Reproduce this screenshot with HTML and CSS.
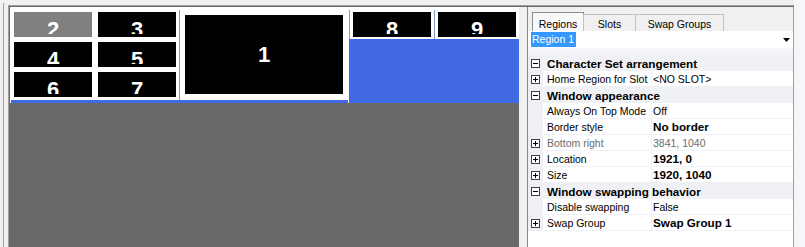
FILE: index.html
```
<!DOCTYPE html>
<html>
<head>
<meta charset="utf-8">
<title>Regions</title>
<link rel="stylesheet" href="styles.css">
</head>
<body>
<div class="edge"><div class="edge-line"></div></div>
<div class="split">
  <div class="split-in">
    <div class="canvas">
      <div class="monrow">
        <div class="mon1">
          <div class="mon1-body">
            <div class="tiles">
              <div class="tile sel"><div class="clip">2</div></div>
              <div class="tile"><div class="clip">3</div></div>
              <div class="tile"><div class="clip">4</div></div>
              <div class="tile"><div class="clip">5</div></div>
              <div class="tile"><div class="clip">6</div></div>
              <div class="tile"><div class="clip">7</div></div>
            </div>
            <div class="vsep vsep-long"></div>
            <div class="bigtile">1</div>
          </div>
          <div class="mon1-bar"></div>
        </div>
        <div class="mon2">
          <div class="mon2-top">
            <div class="vsep"></div>
            <div class="tile"><div class="clip">8</div></div>
            <div class="vsep mid"></div>
            <div class="tile"><div class="clip">9</div></div>
          </div>
          <div class="mon2-fill"></div>
        </div>
      </div>
    </div>
    <div class="gap"></div>
    <div class="props">
      <div class="tabs">
        <div class="tab active t-regions">Regions</div>
        <div class="tab t-slots">Slots</div>
        <div class="tab t-swap">Swap Groups</div>
      </div>
      <div class="page">
        <div class="combo">
          <span class="combo-sel">Region 1</span>
          <svg class="combo-arrow" width="7" height="4" viewBox="0 0 7 4"><path d="M0 0h7L3.5 4z" fill="#000"/></svg>
        </div>
        <div class="spacer"></div>
        <div class="grid">
          <div class="row cat">
            <span class="gut"><svg width="9" height="9" viewBox="0 0 9 9"><rect x="0.5" y="0.5" width="8" height="8" fill="#fff" stroke="#404040"/><path d="M2 4.5h5" stroke="#000"/></svg></span>
            <span class="name">Character Set arrangement</span>
          </div>
          <div class="row">
            <span class="gut"><svg width="9" height="9" viewBox="0 0 9 9"><rect x="0.5" y="0.5" width="8" height="8" fill="#fff" stroke="#404040"/><path d="M2 4.5h5M4.5 2v5" stroke="#000"/></svg></span>
            <span class="lbl">Home Region for Slot</span>
            <span class="val">&lt;NO SLOT&gt;</span>
          </div>
          <div class="row cat">
            <span class="gut"><svg width="9" height="9" viewBox="0 0 9 9"><rect x="0.5" y="0.5" width="8" height="8" fill="#fff" stroke="#404040"/><path d="M2 4.5h5" stroke="#000"/></svg></span>
            <span class="name">Window appearance</span>
          </div>
          <div class="row">
            <span class="gut"></span>
            <span class="lbl">Always On Top Mode</span>
            <span class="val">Off</span>
          </div>
          <div class="row">
            <span class="gut"></span>
            <span class="lbl">Border style</span>
            <span class="val b">No border</span>
          </div>
          <div class="row">
            <span class="gut"><svg width="9" height="9" viewBox="0 0 9 9"><rect x="0.5" y="0.5" width="8" height="8" fill="#fff" stroke="#404040"/><path d="M2 4.5h5M4.5 2v5" stroke="#000"/></svg></span>
            <span class="lbl dim">Bottom right</span>
            <span class="val dim">3841, 1040</span>
          </div>
          <div class="row">
            <span class="gut"><svg width="9" height="9" viewBox="0 0 9 9"><rect x="0.5" y="0.5" width="8" height="8" fill="#fff" stroke="#404040"/><path d="M2 4.5h5M4.5 2v5" stroke="#000"/></svg></span>
            <span class="lbl">Location</span>
            <span class="val b">1921, 0</span>
          </div>
          <div class="row">
            <span class="gut"><svg width="9" height="9" viewBox="0 0 9 9"><rect x="0.5" y="0.5" width="8" height="8" fill="#fff" stroke="#404040"/><path d="M2 4.5h5M4.5 2v5" stroke="#000"/></svg></span>
            <span class="lbl">Size</span>
            <span class="val b">1920, 1040</span>
          </div>
          <div class="row cat">
            <span class="gut"><svg width="9" height="9" viewBox="0 0 9 9"><rect x="0.5" y="0.5" width="8" height="8" fill="#fff" stroke="#404040"/><path d="M2 4.5h5" stroke="#000"/></svg></span>
            <span class="name">Window swapping behavior</span>
          </div>
          <div class="row">
            <span class="gut"></span>
            <span class="lbl">Disable swapping</span>
            <span class="val">False</span>
          </div>
          <div class="row">
            <span class="gut"><svg width="9" height="9" viewBox="0 0 9 9"><rect x="0.5" y="0.5" width="8" height="8" fill="#fff" stroke="#404040"/><path d="M2 4.5h5M4.5 2v5" stroke="#000"/></svg></span>
            <span class="lbl">Swap Group</span>
            <span class="val b">Swap Group 1</span>
          </div>
        </div>
      </div>
    </div>
  </div>
</div>
<div class="rightedge"></div>
</body>
</html>
```

FILE: styles.css
```
html, body {
  margin: 0;
  padding: 0;
}
body {
  width: 805px;
  height: 247px;
  overflow: hidden;
  background: #f0f0f0;
  display: flex;
  font-family: "Liberation Sans", Arial, sans-serif;
  font-size: 10.5px;
  color: #000;
}

.edge {
  flex: none;
  width: 8px;
  height: 247px;
  box-sizing: border-box;
  padding: 3px 0 0 3px;
}
.edge-line {
  width: 1px;
  height: 100%;
  background: #a0a0a0;
}

.split {
  flex: none;
  width: 786px;
  height: 242px;
  margin-top: 5px;
  box-sizing: border-box;
  border-left: 1px solid #a0a0a0;
  border-top: 1px solid #a0a0a0;
}
.split-in {
  height: 100%;
  box-sizing: border-box;
  border-left: 1px solid #696969;
  border-top: 1px solid #696969;
  display: flex;
}

/* ---- monitor canvas ---- */
.canvas {
  flex: none;
  width: 509px;
  background: #696969;
  display: flex;
  flex-direction: column;
}
.monrow {
  flex: none;
  height: 96px;
  display: flex;
}
.mon1 {
  flex: none;
  width: 339px;
  background: #fff;
  display: flex;
  flex-direction: column;
}
.mon1-body {
  flex: none;
  height: 93px;
  display: flex;
  padding-left: 4px;
}
.tiles {
  display: grid;
  grid-template-columns: 78px 78px;
  grid-auto-rows: 25px;
  column-gap: 6px;
  row-gap: 5px;
  padding-top: 5px;
  align-content: start;
}
.tile {
  flex: none;
  height: 25px;
  background: #000;
  color: #fff;
  overflow: hidden;
  text-align: center;
  font: bold 22px/22px "Liberation Sans", Arial, sans-serif;
}
.tile.sel {
  background: #808080;
}
.clip {
  height: 22px;
  box-sizing: border-box;
  padding-top: 7px;
  overflow: hidden;
}
.vsep {
  flex: none;
  width: 1px;
  margin-top: 3px;
  background: #8796c8;
}
.vsep-long {
  margin-left: 3px;
}
.bigtile {
  flex: none;
  width: 158px;
  height: 79px;
  margin: 8px 0 0 5px;
  background: #000;
  color: #fff;
  font: bold 22px/22px "Liberation Sans", Arial, sans-serif;
  display: flex;
  align-items: center;
  justify-content: center;
}
.mon1-bar {
  flex: none;
  height: 3px;
  margin: 0 1px;
  background: #4169e1;
}
.mon2 {
  flex: none;
  width: 170px;
  background: #fff;
  display: flex;
  flex-direction: column;
}
.mon2-top {
  flex: none;
  height: 32px;
  display: flex;
}
.mon2-top .tile {
  width: 78px;
  margin: 5px 0 0 3px;
}
.mon2-top .vsep.mid {
  margin-left: 3px;
}
.mon2-fill {
  flex: 1;
  background: #4169e1;
}

.gap {
  flex: none;
  width: 8px;
}

/* ---- properties panel ---- */
.props {
  flex: none;
  width: 267px;
  box-sizing: border-box;
  border-left: 1px solid #828790;
  border-right: 1px solid #a0a0a0;
  display: flex;
  flex-direction: column;
  background: #f0f0f0;
}
.tabs {
  flex: none;
  height: 24px;
  display: flex;
  align-items: flex-end;
  padding-left: 4px;
}
.tab {
  box-sizing: border-box;
  height: 17px;
  padding-top: 2px;
  border: 1px solid #c0c0c0;
  border-bottom: 0;
  margin-left: -1px;
  background: #f0f0f0;
  display: flex;
  align-items: center;
  justify-content: center;
  white-space: nowrap;
}
.tab.active {
  height: 19px;
  padding-top: 4px;
  margin-left: 0;
  border-color: #898c95;
  background: #f9f9f9;
}
.t-regions { width: 52px; }
.t-slots { width: 53px; }
.t-swap { width: 89px; }

.page {
  flex: 1;
  background: #fff;
  display: flex;
  flex-direction: column;
}
.combo {
  flex: none;
  height: 17px;
  display: flex;
  align-items: center;
  padding-left: 3px;
}
.combo-sel {
  background: #3399ff;
  color: #fff;
  height: 15px;
  line-height: 15px;
  padding: 0 2px 0 1px;
}
.combo-arrow {
  display: block;
  margin-left: auto;
  margin-right: 3px;
}
.spacer {
  flex: none;
  height: 7px;
  background: #f4f6f9;
}
.grid {
  display: flex;
  flex-direction: column;
}
.row {
  flex: none;
  height: 16px;
  display: flex;
}
.gut {
  flex: none;
  width: 15px;
  box-sizing: border-box;
  padding-left: 3px;
  background: #f0f1f4;
  display: flex;
  align-items: center;
}
.gut svg {
  display: block;
}
.cat {
  background: #f0f1f4;
  font-weight: bold;
  font-size: 11.7px;
}
.cat .name {
  padding-left: 4px;
  align-self: center;
  white-space: nowrap;
}
.lbl {
  flex: none;
  width: 109px;
  box-sizing: border-box;
  padding-left: 4px;
  border-right: 1px solid #f0f1f4;
  border-bottom: 1px solid #f0f1f4;
  display: flex;
  align-items: center;
  white-space: nowrap;
  overflow: hidden;
}
.val {
  flex: 1;
  padding-left: 1px;
  border-bottom: 1px solid #f0f1f4;
  display: flex;
  align-items: center;
  white-space: nowrap;
}
.val.b {
  font-weight: bold;
  font-size: 11.7px;
}
.dim {
  color: #6d6d6d;
}

.rightedge {
  flex: none;
  width: 11px;
  height: 247px;
  background: #f4f6f9;
}
```
